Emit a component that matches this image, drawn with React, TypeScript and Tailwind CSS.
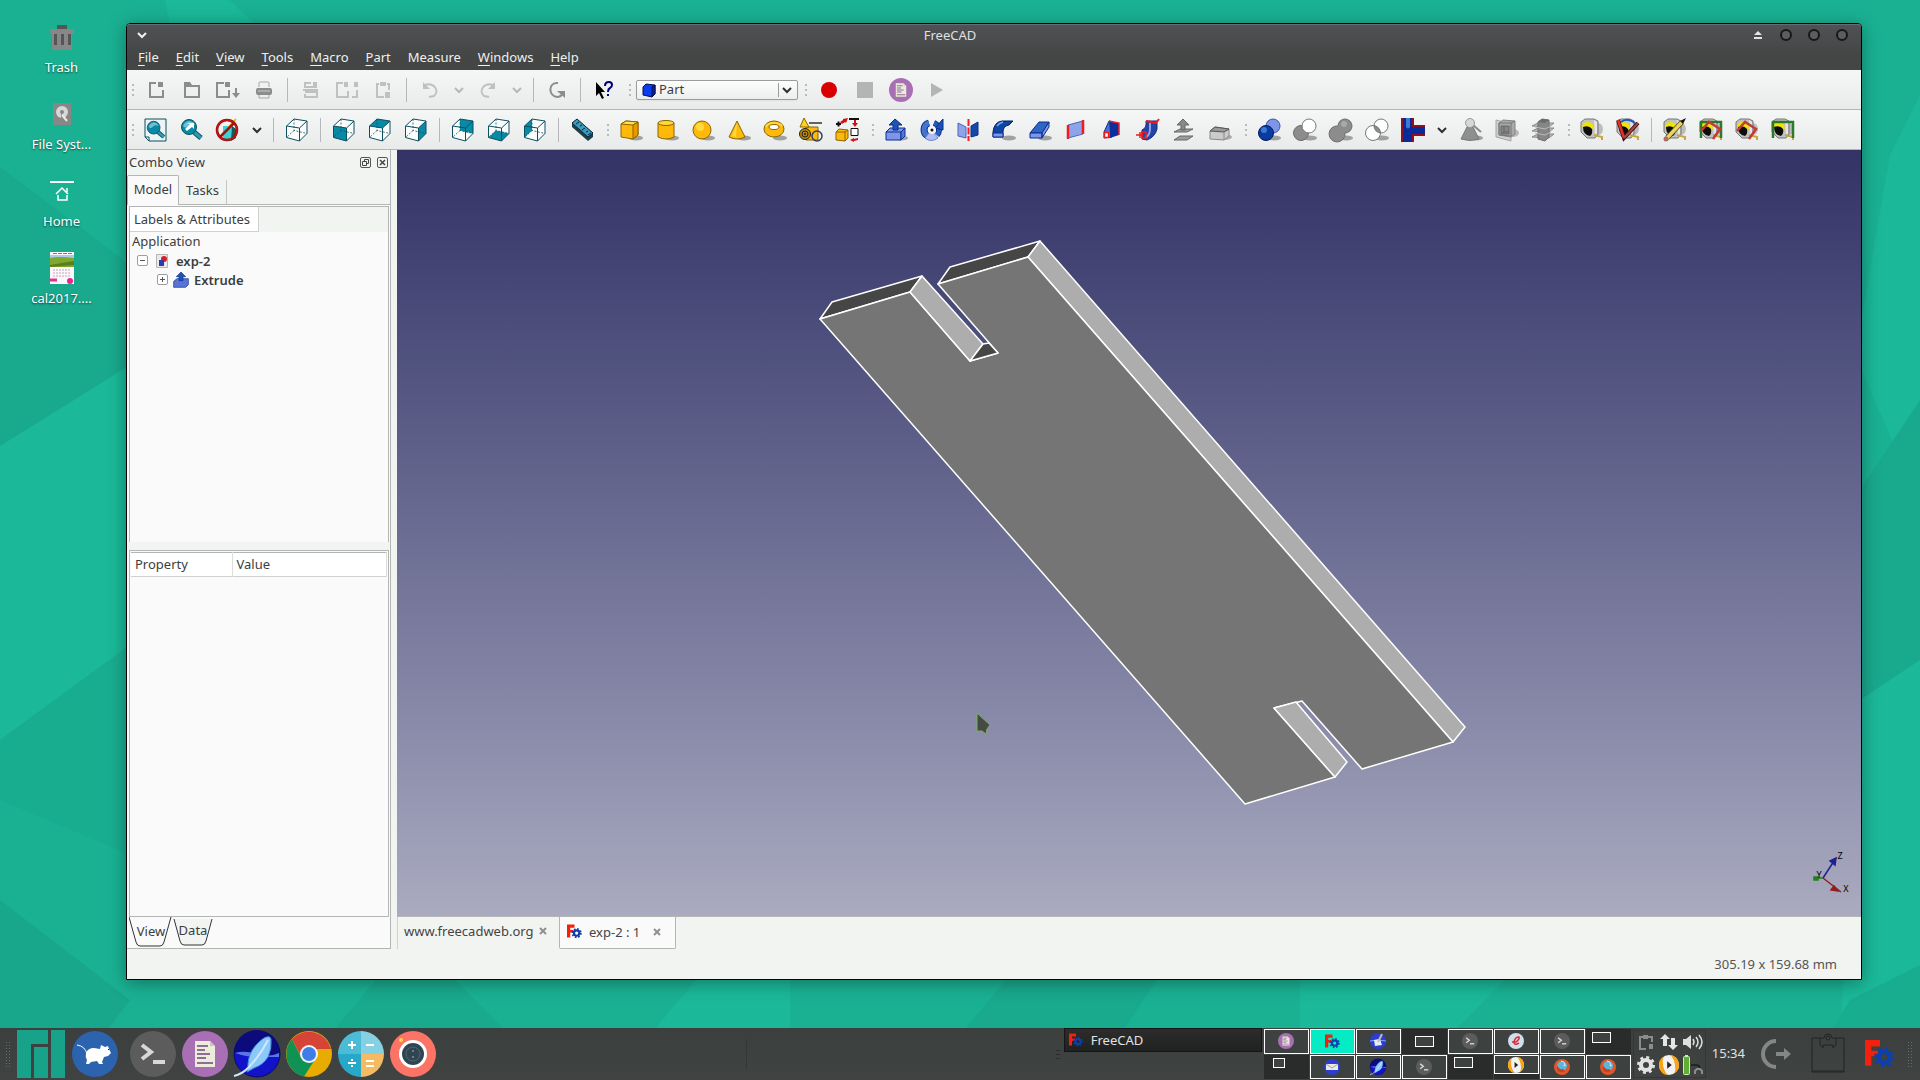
import { ReactNode } from "react";

const YELLOW = "#ffb90a";
const TEAL = "#078aa6";
const LINE = "#0d4f5f";

const Svg = ({ children, size = "h-6 w-6", box = "0 0 24 24" }: { children: ReactNode; size?: string; box?: string }) => (
    <svg className={`${size} shrink-0 overflow-visible`} viewBox={box} fill="none" aria-hidden="true">
        {children}
    </svg>
);

/* ---------- file / edit icons ---------- */

const NewIcon = () => (
    <Svg>
        <path d="M12 5H6v14h13v-7" stroke="#8b8d8d" strokeWidth="2" />
        <rect x="14" y="4" width="5" height="5" fill="#8b8d8d" />
    </Svg>
);
const OpenIcon = () => (
    <Svg>
        <path d="M5 8h14v11H5z" stroke="#8b8d8d" strokeWidth="2" />
        <path d="M4 4h6l2 3H4z" fill="#8b8d8d" />
    </Svg>
);
const SaveIcon = () => (
    <Svg>
        <path d="M8 5H1v14h12v-7" stroke="#8b8d8d" strokeWidth="2" />
        <rect x="9" y="4" width="5" height="5" fill="#8b8d8d" />
        <path d="M19 10h2v5h3l-4 5-4-5h3z" fill="#8b8d8d" />
    </Svg>
);
const PrintIcon = () => (
    <Svg>
        <path d="M7 9V5q0-1 1-1h8q1 0 1 1v4M7 17v3h10v-3" stroke="#a5a7a7" />
        <rect x="4" y="10" width="16" height="7" rx="2" fill="#8b8d8d" />
        <path d="M6 13h12" stroke="#c9cbcb" />
    </Svg>
);
const CutIcon = () => (
    <Svg>
        <path d="M12 5H6v4h12M6 14h12v5H6v-3M4 12h15" stroke="#bfc1c1" strokeWidth="2" />
        <rect x="14" y="4" width="4" height="4" fill="#bfc1c1" />
    </Svg>
);
const CopyIcon = () => (
    <Svg>
        <path d="M8 5H2v14h11v-6M17 19h5v-7" stroke="#bfc1c1" strokeWidth="2" />
        <path d="M9 4h4v5H9zM19 4h4v5h-4z" fill="#bfc1c1" />
    </Svg>
);
const PasteIcon = () => (
    <Svg>
        <path d="M8 6H6v13h7M16 6h2v6" stroke="#bfc1c1" strokeWidth="2" />
        <path d="M9 4h6v4H9zM14 14h5v6h-5z" fill="#bfc1c1" />
    </Svg>
);
const UndoIcon = () => (
    <Svg>
        <path d="M7 7c9-3 15 6 9 11l-5 1" stroke="#bfc1c1" strokeWidth="2" />
        <path d="M5 4v7h7z" fill="#bfc1c1" />
    </Svg>
);
const RedoIcon = () => (
    <Svg>
        <path d="M17 7C8 4 2 13 8 18l5 1" stroke="#bfc1c1" strokeWidth="2" />
        <path d="M19 4v7h-7z" fill="#bfc1c1" />
    </Svg>
);
const RefreshIcon = () => (
    <Svg>
        <path d="M13 5C3 4 3 18 12 19q4 0 6-4" stroke="#8b8d8d" strokeWidth="2" />
        <path d="M12 13h8v7z" fill="#8b8d8d" />
    </Svg>
);
const WhatsThisIcon = () => (
    <Svg>
        <path d="M4 4v14l3-3 3 6 2-1-3-6h4z" fill="#000" />
        <path d="M13 8q0-4 4-4 3 0 3 3 0 2-2 3t-2 4M16 16v2" stroke="#000080" strokeWidth="2" />
    </Svg>
);

/* ---------- view icons ---------- */

const Lens = () => (
    <>
        <path d="m14 14 7 6" stroke={LINE} strokeWidth="5" />
        <path d="m14 14 7 6" stroke="#2c9bb8" strokeWidth="3" />
        <circle cx="9" cy="9" r="7.500" fill={TEAL} stroke={LINE} />
        <path d="M3 8q2-5 7-5 4 1 5 4-5-2-7 1T3 8" fill="#6fc0d4" />
    </>
);
const FitAllIcon = () => (
    <Svg>
        <path d="M1 1h21v22H5l-4-4z" fill="#eef4f5" stroke={LINE} />
        <path d="M1 19h4v4" stroke={LINE} />
        <g transform="translate(2 2) scale(.85)"><Lens /></g>
    </Svg>
);
const FitSelectionIcon = () => (
    <Svg>
        <Lens />
        <path d="m5 11 5-5-3-1h7v6l-2-2-5 4z" fill="#fff" />
    </Svg>
);
const DrawStyleIcon = () => (
    <Svg>
        <path d="M7 8h9l3 3v9l-4 2H7z" fill="#38d3d3" />
        <path d="m16 8 4 3v9l-5 3z" fill="#1a5a5a" />
        <path d="m12 10 8-9" stroke="#f5c400" strokeWidth="2" />
        <circle cx="11" cy="12" r="10" stroke="#8a0a0a" strokeWidth="2.500" />
        <circle cx="11" cy="12" r="10" stroke="#cc1212" strokeWidth="1.500" />
        <path d="M18 5 4 19" stroke="#a80d0d" strokeWidth="2.500" />
    </Svg>
);

const FACES = {
    none: "",
    front: "M1.5 8l13 2v13l-13-3.500z",
    top: "M1.5 8 9 1l13 2-7.500 7z",
    right: "M14.5 10 22 3v12.500l-7.500 7.500z",
    rear: "M9 1l13 2v12.500L9 12.500z",
    bottom: "M1.500 19.500 9 12.500l13 3-7.500 7.500z",
    left: "M1.500 8 9 1v11.500l-7.500 7z",
};

const CubeView = ({ face }: { face: keyof typeof FACES }) => (
    <Svg>
        <path d="M1.500 8 9 1l13 2v12.500L14.500 23l-13-3.500z" fill="#fbfdfd" />
        <path d={FACES[face]} fill={TEAL} />
        <path d="M9 1v11.500l13 3M9 12.500l-7.500 7" stroke={LINE} strokeDasharray="2 1.500" strokeWidth=".8" />
        <path d="M1.500 8 9 1l13 2v12.500L14.500 23l-13-3.500zl13 2V23M14.500 10 22 3" stroke={LINE} strokeLinejoin="round" />
    </Svg>
);
const RulerIcon = () => (
    <Svg>
        <path d="m2 5 5-4 16 14v4l-5 4L2 9z" fill="#1c3f4d" />
        <path d="m2 5 5-4 16 14-5 4z" fill="#3a9bc0" stroke="#12242b" />
        <path d="m9 4-3 2m6 1-2 1m5 2-3 2m6 1-2 1m5 1-3 2" stroke="#12242b" />
    </Svg>
);

/* ---------- solids ---------- */

const Shadow = () => <ellipse cx="17" cy="20" rx="7" ry="2.500" fill="#777" opacity=".65" />;

const BoxIcon = () => (
    <Svg>
        <Shadow />
        <path d="M2 6l5-3 12 1v13l-5 4-12-2z" fill={YELLOW} stroke="#8a6500" />
        <path d="M2 6l5-3 12 1-5 3z" fill="#ffe14a" stroke="#8a6500" />
        <path d="M14 7v14l5-4V4z" fill="#e89a00" stroke="#8a6500" />
    </Svg>
);
const CylinderIcon = () => (
    <Svg>
        <Shadow />
        <path d="M3 5v14q8 4 16 0V5" fill={YELLOW} stroke="#8a6500" />
        <ellipse cx="11" cy="5" rx="8" ry="2.500" fill="#ffd83a" stroke="#8a6500" />
    </Svg>
);
const SphereIcon = () => (
    <Svg>
        <Shadow />
        <circle cx="11" cy="12" r="9" fill={YELLOW} stroke="#8a6500" />
        <circle cx="9" cy="9" r="4" fill="#ffdc3c" />
    </Svg>
);
const ConeIcon = () => (
    <Svg>
        <Shadow />
        <path d="m10 3-8 16q8 4 16 0z" fill={YELLOW} stroke="#8a6500" />
        <path d="m10 5-5 13 4 1z" fill="#ffdc3c" />
    </Svg>
);
const TorusIcon = () => (
    <Svg>
        <Shadow />
        <ellipse cx="11" cy="11" rx="10" ry="8" fill={YELLOW} stroke="#8a6500" />
        <ellipse cx="11" cy="9" rx="5" ry="2.500" fill="#fff" stroke="#8a6500" />
        <path d="M3 9q1-4 8-4 6 0 8 3" stroke="#ffe14a" strokeWidth="1.500" />
    </Svg>
);
const PrimitivesIcon = () => (
    <Svg>
        <path d="M7 9h12v13H7z" fill={YELLOW} stroke="#8a6500" />
        <path d="M5 0 1 9h9z" fill="#ffd21f" stroke="#8a6500" />
        <path d="M10 5h13" stroke="#333" strokeWidth="1.500" />
        <circle cx="6" cy="16" r="5.500" fill="#b88600" stroke="#222" />
        <circle cx="6" cy="16" r="3" stroke="#222" />
        <circle cx="6" cy="16" r="1" fill="#222" />
        <circle cx="18" cy="18" r="5" stroke="#33405c" strokeWidth="1.500" />
    </Svg>
);
const ShapeBuilderIcon = () => (
    <Svg>
        <path d="M1 14l3-3 9 1v8l-3 3-9-1z" fill={YELLOW} stroke="#8a6500" />
        <path d="M1 14h9v9M10 14l3-2" stroke="#8a6500" />
        <path d="M1 6h5M3.500 3.500v5M14 1h10" stroke="#111" strokeWidth="2" />
        <path d="M16 10.500h7v7h-7z" fill="#fff" stroke="#111" />
        <path d="m5 4 3-2v-1l5-1-2 5-1-1-3 2zM19 2h2v3h2l-3 4-3-4h2zM23 20l-4 1v-1l-4 2 4 2v-1l4-1z" fill="#d41111" />
    </Svg>
);

/* ---------- part tools ---------- */

const NAVY = "#0b2f8f";
const SKY = "#7f96e8";

const ExtrudeIcon = () => (
    <Svg>
        <Shadow />
        <path d="m2 14 4-4h15l-4 4v8H2z" fill={SKY} stroke={NAVY} />
        <path d="m17 14 4-4v8l-4 4z" fill="#5a74d6" stroke={NAVY} />
        <path d="M2 14h15" stroke={NAVY} />
        <path d="M11 1 5 7h4v5h5V7h4z" fill="#1c55b5" stroke={NAVY} />
    </Svg>
);
const RevolveIcon = () => (
    <Svg>
        <path d="M8 18a7 7 0 0 1 1-13" stroke={NAVY} strokeWidth="7" />
        <path d="M8 18a7 7 0 0 1 1-13" stroke="#4474cc" strokeWidth="5" />
        <path d="M5 20q6 5 13 0l-4-5q-3 1-5 0z" fill="#b0bdf2" stroke="#6c80cf" />
        <path d="M14 5q5 2 5 7 0 3-2 5" stroke={NAVY} strokeWidth="6" />
        <path d="M14 5q5 2 5 7 0 3-2 5" stroke="#2560bd" strokeWidth="4" />
        <path d="M15 10 23 1v11z" fill="#1c50b8" stroke={NAVY} />
        <circle cx="12" cy="12" r="4" fill="#f4f6fb" />
        <circle cx="12" cy="12" r="1.500" fill="#111" />
    </Svg>
);
const MirrorIcon = () => (
    <Svg>
        <path d="m2 5 8 4v11l-8-2z" fill="#8fa3ea" stroke="#4d65bd" />
        <path d="m22 4-7 4v11l7-2z" fill="#1648a8" stroke={NAVY} />
        <path d="M12.500 1v22" stroke="#ff1c1c" strokeWidth="2" strokeDasharray="7 1.500" />
    </Svg>
);
const FilletIcon = () => (
    <Svg>
        <Shadow />
        <path d="M1 19v-5Q2 4 10 3h11l-4 4q-6 1-6 7v5z" fill="#0d46a5" stroke="#071f66" />
        <path d="M1 19v-4h10v4z" fill={SKY} stroke={NAVY} />
        <path d="M5 8q2-3 6-4" stroke="#7aa4ea" strokeWidth="1.500" />
    </Svg>
);
const ChamferIcon = () => (
    <Svg>
        <Shadow />
        <path d="m2 15 9-11h10l-7 11z" fill="#2d66c4" stroke={NAVY} />
        <path d="M2 15h12v5H2zM14 15l7-11v5l-7 11z" fill={SKY} stroke={NAVY} />
    </Svg>
);
const RuledIcon = () => (
    <Svg>
        <path d="m4 7 14-4v13L4 20z" fill="#8fa3ea" />
        <path d="M4 7v14M19 2v14" stroke="#f21a1a" strokeWidth="2.500" />
        <path d="m4 7 15-4M4 20l15-4" stroke="#4d65bd" />
    </Svg>
);
const LoftIcon = () => (
    <Svg>
        <path d="m4 14 5-11 3 1v15l-8 1z" fill="#4c6fd0" stroke={NAVY} />
        <path d="m9 3 10 2v12l-9 3V14z" fill="#0d2f9c" />
        <path d="m9 3 10 2v12" stroke="#e8232b" strokeWidth="1.500" />
        <path d="M4.500 14.500h4v5h-4z" fill="#fff" stroke="#f21a1a" strokeWidth="1.500" />
    </Svg>
);
const SweepIcon = () => (
    <Svg>
        <path d="M10 3h11v8q-2 8-10 11l-5-1v-9q5-2 4-9" fill="#2144a8" stroke="#132b7a" />
        <path d="M14 5v6q0 6-5 9" stroke="#8fa3ea" strokeWidth="2" />
        <path d="m10 3 10 2 3-4" stroke="#f21a1a" strokeWidth="2" />
        <path d="M0 17h7M4 14v6M6 14h4v6H6z" stroke="#f21a1a" strokeWidth="1.500" />
    </Svg>
);
const OffsetIcon = () => (
    <Svg>
        <path d="m2 22 6-4h13l-6 4zM2 14l6-3h13l-6 3z" fill="#9b9b9b" stroke="#666" />
        <path d="m11 1-6 6h4v5h4V7h4z" fill="#888" stroke="#666" />
    </Svg>
);
const ThicknessIcon = () => (
    <Svg>
        <ellipse cx="16" cy="19" rx="8" ry="3" fill="#aaa" />
        <path d="m2 13 5-4 14 2v7l-5 4-14-1z" fill="#cbcbcb" stroke="#888" />
        <path d="m2 13 5-4 14 2-5 3z" fill="#999" stroke="#555" />
        <path d="M16 14v8" stroke="#888" />
    </Svg>
);

/* ---------- booleans ---------- */

const BooleanIcon = () => (
    <Svg>
        <Shadow />
        <circle cx="16" cy="8" r="7" fill={SKY} stroke="#3a51ad" />
        <circle cx="9" cy="15" r="7.500" fill="#0b3ba0" stroke="#041a57" />
        <circle cx="7" cy="12" r="3" fill="#3b77d8" />
    </Svg>
);
const SubtractIcon = () => (
    <Svg>
        <Shadow />
        <circle cx="8" cy="15" r="7.500" fill="#8c8c8c" stroke="#6d6d6d" />
        <circle cx="16" cy="8" r="7" fill="#fff" stroke="#777" />
    </Svg>
);
const UnionIcon = () => (
    <Svg>
        <Shadow />
        <path d="M9 8a7 7 0 1 1 7 7 8 8 0 1 1-7-7" fill="#8c8c8c" stroke="#6d6d6d" />
        <circle cx="15" cy="6" r="3" fill="#a8a8a8" />
    </Svg>
);
const IntersectIcon = () => (
    <Svg>
        <Shadow />
        <circle cx="8" cy="15" r="7.500" fill="#fff" />
        <circle cx="16" cy="8" r="7" fill="#fff" />
        <path d="M9 7.500a7.500 7.500 0 0 1 6.500 7.500A7 7 0 0 1 9 7.500" fill="#8c8c8c" />
        <circle cx="8" cy="15" r="7.500" stroke="#777" />
        <circle cx="16" cy="8" r="7" stroke="#777" />
    </Svg>
);
const JoinIcon = () => (
    <Svg>
        <path d="M1 0h11v24H1z" fill="#0a2a99" />
        <path d="M12 9h12v7H12z" fill="#0a2a99" />
        <path d="M5 0h4v9q-2 3-4 0z" fill="#3d78d8" />
        <path d="M1 0v24M12 0v8h12M12 24v-7h12" stroke="#8c1220" strokeWidth="2" />
    </Svg>
);
const CheckGeometryIcon = () => (
    <Svg>
        <Shadow />
        <path d="M8 9 2 21q9 3 18 0L14 9z" fill="#8f8f8f" stroke="#777" />
        <path d="m14 7 8 7" stroke="#888" strokeWidth="2" />
        <circle cx="11" cy="5" r="4.500" fill="#d7d7d7" stroke="#999" />
    </Svg>
);
const SectionIcon = () => (
    <Svg>
        <ellipse cx="18" cy="15" rx="6" ry="4" fill="#b9b9b9" />
        <path d="m1 2 15 4v17L1 19z" fill="#cfcfcf" stroke="#a5a5a5" />
        <path d="m4 5 4-3 12 1v13l-4 3-12-2z" fill="#a9a9a9" stroke="#858585" />
        <path d="M4 5h12v13L4 17zM16 5l4-2" stroke="#777" />
        <path d="M6 8h8v8H6z" fill="#858585" stroke="#666" />
        <path d="M9 8v6l-3 2M9 14h5" stroke="#666" />
    </Svg>
);
const CrossSectionsIcon = () => (
    <Svg>
        <path d="m1 8 6-3h16l-5 4zM1 13l6-3h16l-5 4zM1 19l6-3h16l-5 4z" fill="#bbb" stroke="#8a8a8a" />
        <path d="m7 4 4-3 7 1v17l-4 4-7-2z" fill="#868686" stroke="#6d6d6d" />
        <path d="m7 4 4-3 7 1-4 3z" fill="#6b6b6b" />
        <path d="m4 9 10 2 6-3M4 15l10 2 6-3" stroke="#bbb" />
    </Svg>
);

/* ---------- measure ---------- */

const Tape = ({ children }: { children?: ReactNode }) => (
    <Svg>
        <ellipse cx="18" cy="11" rx="5" ry="6" fill="#999" opacity=".6" />
        <path d="M1 4 5 1h9l4 2v13l-3 4H7l-6-6z" fill="#c2c2c2" stroke="#777" />
        <path d="m14 2 3 2v11l-2 3z" fill="#e6e6e6" />
        <path d="M2 9q1-5 6-5 6 1 6 7z" fill="#f0e400" />
        <path d="M3 9q6-2 9 2 1 5-2 7-7-1-7-9" fill="#0d0d0d" />
        <path d="m14 17 8 2v3" stroke="#c8a63c" strokeWidth="2" />
        {children}
    </Svg>
);
const LinearIcon = () => <Tape />;
const AngularIcon = () => (
    <Tape>
        <path d="M5 4q6-5 14 1" stroke="#1c59c4" strokeWidth="2" />
        <path d="m2 2 6 18L22 5" stroke="#4a0d0d" strokeWidth="4" />
        <path d="m2 2 6 18" stroke="#e03030" strokeWidth="2.500" />
        <path d="M8 20 22 5" stroke="#a04848" strokeWidth="2" />
    </Tape>
);
const ClearMeasureIcon = () => (
    <Tape>
        <path d="M4 20 19 4" stroke="#4c431c" strokeWidth="5" />
        <path d="M4 20 19 4" stroke="#ead65c" strokeWidth="3.500" />
        <path d="m17 3 6-3-3 6z" fill="#111" />
        <circle cx="3" cy="21" r="2.500" fill="#b06a6a" />
    </Tape>
);
const ToggleAllIcon = () => (
    <Tape>
        <path d="M2 20V4h20v16" stroke="#2a7a2a" strokeWidth="2.500" />
        <path d="m2 13 8-9 11 7-7 10" stroke="#c23a3a" strokeWidth="2.500" />
    </Tape>
);
const Toggle3dIcon = () => (
    <Tape>
        <path d="m2 13 8-9 11 7-7 10" stroke="#c23a3a" strokeWidth="2.500" />
    </Tape>
);
const ToggleDeltaIcon = () => (
    <Tape>
        <path d="M2 20V4h20v16" stroke="#2a7a2a" strokeWidth="2.500" />
    </Tape>
);

/* ---------- macro and app icons ---------- */

const RecordIcon = () => <Svg><circle cx="12" cy="12" r="8" fill="#d90000" /></Svg>;
const StopIcon = () => <Svg><path d="M4 4h16v16H4z" fill="#b3b4b4" /></Svg>;
const PlayIcon = () => <Svg><path d="m6 5 12 7-12 7z" fill="#b3b4b4" /></Svg>;

const TextApp = ({ size }: { size: string }) => (
    <Svg size={size} box="0 0 46 46">
        <circle cx="23" cy="23" r="23" fill="#a96fb4" />
        <path d="M13 10h15l5 5v21H13z" fill="#ecebdc" />
        <path d="M28 10v5h5z" fill="#c9c7b8" />
        <path d="M15 15h11M15 19h8M15 23h13M15 27h9M15 32h16" stroke="#8e6f94" strokeWidth="2" />
    </Svg>
);
const MacroIcon = () => <TextApp size="h-6 w-6" />;

const TerminalApp = ({ size }: { size: string }) => (
    <Svg size={size} box="0 0 46 46">
        <circle cx="23" cy="23" r="23" fill="#5c5c5c" />
        <path d="m12 14 9 7-9 7" stroke="#d8d8d8" strokeWidth="4" />
        <path d="M23 31h12" stroke="#d8d8d8" strokeWidth="4" />
    </Svg>
);
const SeamonkeyApp = ({ size }: { size: string }) => (
    <Svg size={size} box="0 0 46 46">
        <circle cx="23" cy="23" r="23" fill="#1212c8" stroke="#0a0a6a" />
        <path d="M0 22a23 23 0 0 1 46 0q-12 4-23 1T0 22" fill="#0b0b7d" />
        <path d="M1 22q10-3 22 1t22-1v4q-12 0-22 0T1 22" fill="#5c74ea" />
        <path d="M14 38C13 24 20 14 30 7q6-3 7 1 1 10-3 18-5 8-14 11l-7 4z" fill="#8cc8f8" stroke="#3f86d6" />
        <path d="M0 45q8-2 14-8 12-12 20-28" stroke="#cfe8ff" strokeWidth="2" />
    </Svg>
);
const FreecadLogo = ({ size }: { size: string }) => (
    <Svg size={size} box="0 0 28 28">
        <path d="M0 1h14v6H6v4h6v5H6v9H0z" fill="#f2200c" />
        <circle cx="18" cy="17" r="5" stroke="#0d3fae" strokeWidth="4" />
        <circle cx="18" cy="17" r="7.500" stroke="#0d3fae" strokeWidth="4" strokeDasharray="2.900 2.990" />
    </Svg>
);
const ManjaroLogo = () => (
    <Svg size="h-12 w-12" box="0 0 48 48">
        <path d="M0 0h31v14H14v34H0zM17 17h14v31H17zM34 0h14v48H34z" fill="#17a289" />
    </Svg>
);
const XfceApp = () => (
    <Svg size="h-[46px] w-[46px]" box="0 0 46 46">
        <circle cx="23" cy="23" r="23" fill="#2c63ae" />
        <path d="M14 22q2-5 8-5l6 1 1-4 4 2 3-1 1 3 2 4-3 3-4 1-2 5 1 2h-4l-2-3-6 1-2 2h-3l1-4q-2-3-1-7z" fill="#fff" />
        <path d="M15 23Q13 15 5 14" stroke="#fff" />
        <path d="M36 18h1v1h-1z" fill="#222" />
    </Svg>
);
const ChromeApp = () => (
    <Svg size="h-[46px] w-[46px]" box="0 0 46 46">
        <circle cx="23" cy="23" r="23" fill="#e8ab00" />
        <path d="M6 8a23 23 0 0 1 39 10H23l-7 9z" fill="#d64337" />
        <path d="M6 8a23 23 0 0 0 12 37.500L28 30l-12-2z" fill="#109255" />
        <circle cx="23" cy="23" r="9" fill="#f4f4f4" />
        <circle cx="23" cy="23" r="7" fill="#3f7ee8" />
    </Svg>
);
const CalculatorApp = () => (
    <Svg size="h-[46px] w-[46px]" box="0 0 46 46">
        <path d="M23 0A23 23 0 0 0 0 23h23z" fill="#4cbcd6" />
        <path d="M23 0a23 23 0 0 1 23 23H23z" fill="#86d0e4" />
        <path d="M0 23a23 23 0 0 0 23 23V23z" fill="#27a8c8" />
        <path d="M46 23a23 23 0 0 1-23 23V23z" fill="#f4bb62" />
        <path d="M10 14h8M14 10v8M28 14h8M10 32h8M28 30h8M28 35h8" stroke="#fff" strokeWidth="2" />
        <path d="M13 28h2v2h-2zM13 34h2v2h-2z" fill="#fff" />
    </Svg>
);
const CameraApp = () => (
    <Svg size="h-[46px] w-[46px]" box="0 0 46 46">
        <circle cx="23" cy="23" r="23" fill="#fb7466" />
        <circle cx="11" cy="9" r="2" fill="#f9d64a" />
        <circle cx="23" cy="23" r="14" fill="#fff" />
        <circle cx="23" cy="23" r="11" fill="#2f4552" />
        <circle cx="23" cy="23" r="7" stroke="#4f6673" />
        <circle cx="23" cy="20" r="1" fill="#7e919c" />
        <circle cx="23" cy="26" r="1" fill="#7e919c" />
    </Svg>
);
const MediaApp = ({ size }: { size: string }) => (
    <Svg size={size} box="0 0 22 22">
        <circle cx="11" cy="11" r="11" fill="#f2f2f2" />
        <path d="M5 2a11 11 0 0 0 4 20Q2 12 5 2M17 20a11 11 0 0 0-4-20q7 10 4 20" fill="#f7a516" />
        <path d="M9 7v8l5-4z" fill="#222" />
    </Svg>
);
const FirefoxApp = () => (
    <Svg size="h-4 w-4" box="0 0 16 16">
        <circle cx="8" cy="8" r="8" fill="#e0552b" />
        <circle cx="8" cy="7" r="5" fill="#5cb6d8" />
        <path d="M3 6q2 5 6 4l2 2q-5 3-8-1z" fill="#c9401f" />
        <path d="M7 2q5 1 3 5l2-1" stroke="#cdeefa" />
    </Svg>
);
const ReaderApp = () => (
    <Svg size="h-4 w-4" box="0 0 16 16">
        <circle cx="8" cy="8" r="8" fill="#cfe0ea" />
        <path d="M4 9h4q4-3 3-5-4 0-5 5 0 4 5 1" stroke="#d62a3b" strokeWidth="1.500" />
    </Svg>
);
const MailApp = () => (
    <Svg size="h-4 w-4" box="0 0 16 16">
        <circle cx="8" cy="8" r="8" fill="#2a3fd0" />
        <path d="M2 5h12v6H2z" fill="#efe9e4" />
        <path d="m2 5 6 4 6-4" stroke="#a59d98" />
    </Svg>
);
const ComposerApp = () => (
    <Svg size="h-4 w-4" box="0 0 16 16">
        <circle cx="8" cy="8" r="8" fill="#2a3fd0" />
        <path d="M0 8q8-2 16 0" stroke="#88a4ff" />
        <path d="m4 7 6-1 2 6-7 1z" fill="#e8ecf5" />
        <path d="m8 9 4-8" stroke="#cbb9ae" strokeWidth="2" />
    </Svg>
);

/* ---------- toolbar ---------- */

const Handle = ({ first = false }: { first?: boolean }) => (
    <div className={`${first ? "w-[11px]" : "w-[13px]"} flex shrink-0 flex-col items-end gap-[3px] pr-1`}>
        <i className="h-0.5 w-0.5 bg-[#b9bbbb]" />
        <i className="h-0.5 w-0.5 bg-[#b9bbbb]" />
        <i className="h-0.5 w-0.5 bg-[#b9bbbb]" />
    </div>
);

const Separator = () => (
    <div className="flex w-[11px] shrink-0 justify-center">
        <i className="h-6 w-px bg-[#b6b8b8]" />
    </div>
);

const Chevron = ({ color = "#2c3030" }: { color?: string }) => (
    <Svg size="h-3 w-3" box="0 0 12 12">
        <path d="m2 4 4 4 4-4" stroke={color} strokeWidth="2" />
    </Svg>
);

type Tool = [string, () => ReactNode];

const Tools = ({ items }: { items: Tool[] }) => (
    <>
        {items.map(([label, Icon]) => (
            <button key={label} aria-label={label} className="flex h-9 w-9 shrink-0 items-center justify-center">
                <Icon />
            </button>
        ))}
    </>
);

const DropArrow = ({ label, color }: { label: string; color?: string }) => (
    <button aria-label={label} className="flex h-9 w-[22px] shrink-0 items-center justify-center">
        <Chevron color={color} />
    </button>
);

const face = (name: keyof typeof FACES) => () => <CubeView face={name} />;

const FileToolbar = () => (
    <div className="flex h-10 items-center border-b border-[#b4b6b6] bg-linear-to-b from-[#f5f7f6] to-[#e9ebeb]">
        <Handle first />
        <Tools items={[["New", NewIcon], ["Open", OpenIcon], ["Save", SaveIcon], ["Print", PrintIcon]]} />
        <Separator />
        <Tools items={[["Cut", CutIcon], ["Copy", CopyIcon], ["Paste", PasteIcon]]} />
        <Separator />
        <Tools items={[["Undo", UndoIcon]]} />
        <DropArrow label="Undo history" color="#b6b8b8" />
        <Tools items={[["Redo", RedoIcon]]} />
        <DropArrow label="Redo history" color="#b6b8b8" />
        <Separator />
        <Tools items={[["Refresh", RefreshIcon]]} />
        <Separator />
        <Tools items={[["What's This?", WhatsThisIcon]]} />
        <Handle />
        <label className="ml-px flex h-5 w-[162px] items-center rounded-xs border border-[#9a9c9c] bg-linear-to-b from-[#fdfdfd] to-[#eceeee] px-1 shadow-xs">
            <Svg size="h-4 w-4" box="0 0 16 16">
                <path d="m2 5 3-3 9 1v9l-3 3-9-2z" fill="#0a3cf0" stroke="#050f4a" />
                <path d="m11 5 3-2v9l-3 3z" fill="#0620a0" stroke="#050f4a" />
            </Svg>
            <select aria-label="Workbench" className="min-w-0 grow appearance-none pb-0.5 pl-0.5 leading-4 outline-none">
                <option>Part</option>
            </select>
            <span className="mr-0.5 h-3.5 w-px bg-[#9a9c9c]" />
            <Chevron />
        </label>
        <Handle />
        <Tools items={[["Record macro", RecordIcon], ["Stop recording", StopIcon], ["Macros", MacroIcon], ["Run macro", PlayIcon]]} />
    </div>
);

const PartToolbar = () => (
    <div className="flex h-10 items-center border-b border-[#b4b6b6] bg-linear-to-b from-[#f5f7f6] to-[#e9ebeb]">
        <Handle first />
        <Tools items={[["Fit all", FitAllIcon], ["Fit selection", FitSelectionIcon], ["Draw style", DrawStyleIcon]]} />
        <DropArrow label="Draw styles" />
        <Separator />
        <Tools items={[["Axonometric", face("none")]]} />
        <Separator />
        <Tools items={[["Front", face("front")], ["Top", face("top")], ["Right", face("right")]]} />
        <Separator />
        <Tools items={[["Rear", face("rear")], ["Bottom", face("bottom")], ["Left", face("left")]]} />
        <Separator />
        <Tools items={[["Measure distance", RulerIcon]]} />
        <Handle />
        <Tools items={[["Box", BoxIcon], ["Cylinder", CylinderIcon], ["Sphere", SphereIcon], ["Cone", ConeIcon], ["Torus", TorusIcon], ["Primitives", PrimitivesIcon], ["Shape builder", ShapeBuilderIcon]]} />
        <Handle />
        <Tools items={[["Extrude", ExtrudeIcon], ["Revolve", RevolveIcon], ["Mirror", MirrorIcon], ["Fillet", FilletIcon], ["Chamfer", ChamferIcon], ["Ruled surface", RuledIcon], ["Loft", LoftIcon], ["Sweep", SweepIcon], ["Offset", OffsetIcon], ["Thickness", ThicknessIcon]]} />
        <Handle />
        <Tools items={[["Boolean", BooleanIcon], ["Subtract", SubtractIcon], ["Union", UnionIcon], ["Intersection", IntersectIcon], ["Join", JoinIcon]]} />
        <DropArrow label="Join options" />
        <Tools items={[["Check geometry", CheckGeometryIcon], ["Section", SectionIcon], ["Cross-sections", CrossSectionsIcon]]} />
        <Handle />
        <Tools items={[["Measure linear", LinearIcon], ["Measure angular", AngularIcon]]} />
        <Separator />
        <Tools items={[["Clear all", ClearMeasureIcon], ["Toggle all", ToggleAllIcon], ["Toggle 3D", Toggle3dIcon], ["Toggle delta", ToggleDeltaIcon]]} />
    </div>
);

/* ---------- window chrome ---------- */

const TitleBar = () => (
    <div className="flex h-[22px] items-center border-t border-[#6a6b6e] pr-[13px] pb-px pl-[9px]">
        <button aria-label="Window menu">
            <Chevron color="#f2f2f2" />
        </button>
        <h1 className="grow text-center text-[#dfe0e0]">FreeCAD</h1>
        <div className="flex items-center gap-4">
            <button aria-label="Keep above">
                <Svg size="h-3 w-3" box="0 0 12 12">
                    <path d="m2 6 4-4 4 4zM2 8h8v2H2z" fill="#e4e4e4" />
                </Svg>
            </button>
            {["Minimize", "Maximize", "Close"].map((name) => (
                <button key={name} aria-label={name} className="h-3 w-3 rounded-full border-2 border-[#161718] bg-[#5c5d60]" />
            ))}
        </div>
    </div>
);

const MENUS = ["File", "Edit", "View", "Tools", "Macro", "Part", "Measure", "Windows", "Help"];

const MenuBar = () => (
    <nav className="flex h-6 items-center gap-[17px] pb-0.5 pl-[11px] text-[#eff0f0]">
        {MENUS.map((name) => (
            <button key={name} className="leading-5">
                {name === "Measure" ? name : <><span className="underline underline-offset-3">{name[0]}</span>{name.slice(1)}</>}
            </button>
        ))}
    </nav>
);

const TreeToggle = ({ open = false }: { open?: boolean }) => (
    <button aria-label={open ? "Collapse" : "Expand"} className="flex h-[11px] w-[11px] items-center justify-center rounded-xs border border-[#9c9e9e] bg-white">
        <Svg size="h-[9px] w-[9px]" box="0 0 9 9">
            <path d={open ? "M2 4.500h5" : "M2 4.500h5M4.500 2v5"} stroke="#555" />
        </Svg>
    </button>
);

const ComboView = () => (
    <aside className="flex w-[264px] shrink-0 flex-col border-r border-b border-[#b4b6b6]">
        <div className="flex h-6 items-center gap-1.5 px-0.5">
            <h2 className="grow">Combo View</h2>
            <button aria-label="Float" className="flex h-[11px] w-[11px] items-center justify-center rounded-xs border border-[#555]">
                <Svg size="h-[7px] w-[7px]" box="0 0 7 7"><path d="M.5 2.500h4v4h-4zM2.500 2.500v-2h4v4h-2" stroke="#444" /></Svg>
            </button>
            <button aria-label="Close panel" className="flex h-[11px] w-[11px] items-center justify-center rounded-xs border border-[#555]">
                <Svg size="h-[7px] w-[7px]" box="0 0 7 7"><path d="m1 1 5 5M6 1 1 6" stroke="#444" strokeWidth="1.500" /></Svg>
            </button>
        </div>
        <div className="flex h-[31px] items-end border-b border-[#b4b6b6]">
            <button className="-mb-px h-[30px] w-[52px] rounded-t-xs border border-b-0 border-[#b4b6b6] bg-[#fafafa] pb-1">Model</button>
            <button className="h-6 w-12 border-r border-[#c4c6c6] pb-1">Tasks</button>
        </div>
        <div className="flex grow flex-col bg-[#fafafa]">
            <section className="mt-px mr-px ml-0.5 flex grow-337 basis-0 flex-col border-t border-r border-l border-[#b4b6b6]">
                <div className="flex h-[25px] bg-[#f2f4f2]">
                    <div className="border-r border-b border-[#cfd1d1] bg-white pr-2 pl-1 leading-6">Labels &amp; Attributes</div>
                </div>
                <div className="pl-0.5">
                    <p className="leading-[19px]">Application</p>
                    <ul className="font-semibold">
                        <li>
                            <div className="flex h-[19px] items-center gap-2 pl-[5px]">
                                <TreeToggle open />
                                <Svg size="h-3.5 w-3" box="0 0 12 14">
                                    <path d="M.5.500h11v13H.5z" fill="#e9e9e9" stroke="#b5b5b5" />
                                    <circle cx="8" cy="5" r="3" fill="#d0202c" />
                                    <path d="M3 6h5v6H3z" fill="#2a3bb0" />
                                </Svg>
                                <span className="leading-[18px]">exp-2</span>
                            </div>
                            <ul className="pl-[25px]">
                                <li className="flex h-[19px] items-center gap-[5px]">
                                    <TreeToggle />
                                    <Svg size="h-4 w-4">
                                        <path d="m1 14 5-4h17v9l-4 4H1z" fill="#5a74d6" stroke={NAVY} />
                                        <path d="M12 0 5 7h4v6h6V7h4z" fill="#1c55b5" stroke={NAVY} />
                                    </Svg>
                                    <span className="leading-[18px]">Extrude</span>
                                </li>
                            </ul>
                        </li>
                    </ul>
                </div>
            </section>
            <div className="h-2 bg-[#f2f4f2]" />
            <section className="mr-px ml-0.5 flex grow-366 basis-0 flex-col border border-[#b4b6b6] p-px">
                <table className="w-full table-fixed border-t border-[#b4b6b6] bg-white text-left">
                    <thead>
                        <tr className="h-6 border-b border-[#d0d2d2]">
                            <th className="w-[101px] border-r border-[#dcdede] pl-1 font-normal">Property</th>
                            <th className="border-r border-[#dcdede] pl-1 font-normal">Value</th>
                        </tr>
                    </thead>
                </table>
            </section>
            <div className="flex h-[31px] items-start pl-0.5">
                <button className="relative h-[30px] w-[44px] pb-0.5 text-center">
                    <svg className="absolute inset-0 h-full w-full" viewBox="0 0 44 30" fill="none" aria-hidden="true">
                        <path d="m0 0 7 25q1 4 4 4h20q3 0 4-4l7-25" stroke="#333" />
                    </svg>
                    <span className="relative">View</span>
                </button>
                <button className="relative h-[30px] w-[40px] pb-1 text-center">
                    <svg className="absolute inset-0 h-full w-full" viewBox="0 0 40 30" fill="none" aria-hidden="true">
                        <path d="m1 2 6 22q1 4 4 4h18q3 0 4-4l6-22" fill="#f2f4f2" stroke="#333" />
                    </svg>
                    <span className="relative">Data</span>
                </button>
            </div>
        </div>
    </aside>
);

const Viewport = () => (
    <div className="min-h-0 grow basis-0 bg-linear-to-b from-[#333366] to-[#aaaac0]">
        <svg className="h-full w-full" viewBox="0 0 1464 766" role="img" aria-label="Extruded plate">
            <g stroke="#fff" strokeWidth="1.500" strokeLinejoin="round">
                <path d="M423 169 435 152 525 126 513 142z" fill="#464646" />
                <path d="M541 134 553 117 643 91 631 107z" fill="#464646" />
                <path d="M631 107 643 91 1068 577 1056 592z" fill="#adadad" />
                <path
                    d="M423 169 513 142 573 211 601 203 541 134 631 107 1056 592 965 619 905 551 877 558 938 627 848 654z"
                    fill="#757575"
                />
                <path d="M513 142 525 126 586 194 573 211z" fill="#adadad" />
                <path d="M573 211 586 194 592 193 601 203z" fill="#464646" />
                <path d="M877 558 899 552 950 612 938 627z" fill="#adadad" />
            </g>
            <path d="M580 563v18h5l4 3 1-5 3-4z" fill="#454a44" stroke="#7fae5c" />
            <g strokeWidth="1.500">
                <path d="M1426 728 1439 708" stroke="#202090" />
                <path d="m1439 708-1 7-5-4z" fill="#202090" stroke="#202090" />
                <path d="m1426 728 18 14" stroke="#902020" />
                <path d="m1441 741-4-5-3 4z" fill="#902020" stroke="#902020" />
                <path d="M1426 728h-9" stroke="#208020" />
                <path d="M1417 727h4v3h-4z" fill="#208020" stroke="#208020" />
            </g>
            <g fontSize="9" textAnchor="middle" fill="#000">
                <text x="1443" y="709">Z</text>
                <text x="1449" y="742">X</text>
                <text x="1422" y="728">Y</text>
            </g>
        </svg>
    </div>
);

const CloseMark = () => (
    <Svg size="h-2.5 w-2.5" box="0 0 10 10">
        <path d="m2 2 6 6M8 2 2 8" stroke="#8f9191" strokeWidth="2" />
    </Svg>
);

const DocumentTabs = () => (
    <div className="flex h-[33px] shrink-0 border-t border-[#b4b6b6] text-[#444]">
        <div className="flex w-[162px] items-center gap-1 border-l border-[#d0d2d2] pb-1 pl-1.5">
            <button className="leading-6">www.freecadweb.org</button>
            <button aria-label="Close tab"><CloseMark /></button>
        </div>
        <div className="flex w-[117px] items-center rounded-b-xs border border-t-0 border-[#b4b6b6] bg-[#fafafa] pb-0.5 pl-[7px]">
            <FreecadLogo size="h-[15px] w-[15px]" />
            <button className="pr-3 pl-[7px] leading-6">exp-2 : 1</button>
            <button aria-label="Close tab"><CloseMark /></button>
        </div>
    </div>
);

const FreecadWindow = () => (
    <main className="mt-[23px] mr-[58px] mb-12 flex min-w-0 grow flex-col overflow-hidden rounded-t-sm border border-black bg-[#f2f4f2] text-[#3b3e3e] shadow-[0_3px_18px_rgba(0,0,0,0.35)]">
        <header className="bg-linear-to-b from-[#505155] to-[#434645] to-70%">
            <TitleBar />
            <MenuBar />
        </header>
        <FileToolbar />
        <PartToolbar />
        <div className="flex min-h-0 grow">
            <ComboView />
            <div className="ml-1.5 flex min-w-0 grow flex-col">
                <Viewport />
                <DocumentTabs />
            </div>
        </div>
        <footer className="flex h-[30px] shrink-0 items-center justify-end pr-6 text-[#555]">305.19 x 159.68 mm</footer>
    </main>
);

/* ---------- desktop ---------- */

const Wallpaper = () => (
    <svg className="absolute inset-0 h-full w-full" viewBox="0 0 1920 1080" preserveAspectRatio="none" aria-hidden="true">
        <path d="M0 0h1920v1080H0z" fill="#1ab193" />
        <path d="M165 0h65l25 25H170z" fill="#1bb899" />
        <path d="M0 167 130 265v105L0 446z" fill="#19a98d" />
        <path d="M0 446 130 365v280L0 740z" fill="#1bb899" />
        <path d="m0 740 130-95v210L0 800z" fill="#19ad90" />
        <path d="m0 900 130 100-60 80H0z" fill="#18a78b" />
        <path d="M380 975h70l60 60H330zM1010 975h150l-40 60H960z" fill="#19a98d" />
        <path d="M1300 975h210l-60 60h-150zM700 975h90v60H650z" fill="#1bb899" />
        <path d="m1920 95-30 60-35 200 65 150z" fill="#1bb899" />
        <path d="M1860 490 1920 400v260l-60 40z" fill="#19a98d" />
        <path d="M1860 700 1920 660v310l-80 65z" fill="#1bb899" />
        <path d="M1920 965v115h-120l50-80z" fill="#19ad90" />
    </svg>
);

const TrashIcon = () => (
    <Svg size="h-[26px] w-6" box="0 0 24 26">
        <path d="M7 1h10v4H7z" fill="#555" />
        <path d="M0 5h24v5h-2v16H2V10H0z" fill="#878787" />
        <path d="M4 10h3v11H4zM11 10h3v11h-3zM18 10h3v11h-3z" fill="#555" />
    </Svg>
);
const DiskIcon = () => (
    <Svg size="h-[22px] w-[18px]" box="0 0 18 22">
        <rect width="18" height="22" rx="1" fill="#878787" />
        <circle cx="9" cy="9" r="6" fill="#d5d9d5" />
        <circle cx="9" cy="9" r="2" fill="#878787" />
        <path d="m8 10 7 9H8z" fill="#878787" />
        <path d="m9 12 5 6" stroke="#e8e8e8" strokeWidth="2" />
    </Svg>
);
const HomeIcon = () => (
    <Svg size="h-5 w-6" box="0 0 24 20">
        <path d="M0 1h24" stroke="#fff" strokeWidth="2" />
        <path d="m6 13 6-6 6 6M8 14v5h9v-5M17 7v4" stroke="#fff" strokeWidth="1.500" />
    </Svg>
);
const CalendarThumb = () => (
    <Svg size="h-8 w-6" box="0 0 24 32">
        <path d="M0 0h24v32H0z" fill="#fbf7fb" />
        <path d="M0 3h24v12H0z" fill="#7fa82c" />
        <path d="M0 3h24v3Q8 4 0 6z" fill="#a9cbe8" />
        <path d="M3 1.500h19" stroke="#2f8fd0" strokeDasharray="4 1" />
        <path d="m0 13 24-4v4l-24 2z" fill="#5c7f1e" />
        <path d="M3 18h18M3 21h18M3 24h18" stroke="#c3a8b8" strokeDasharray="2 1" />
        <path d="M0 28h7" stroke="#e0348c" strokeWidth="3" />
        <circle cx="20" cy="29" r="3" fill="#e8268c" />
    </Svg>
);

const DESKTOP_ITEMS: Tool[] = [["Trash", TrashIcon], ["File Syst...", DiskIcon], ["Home", HomeIcon], ["cal2017....", CalendarThumb]];

const DesktopIcons = () => (
    <div className="flex w-[126px] shrink-0 flex-col pt-[17px]">
        {DESKTOP_ITEMS.map(([name, Icon]) => (
            <button key={name} className="flex h-[77px] w-[123px] flex-col items-center text-white [text-shadow:0_1px_2px_rgba(0,0,0,0.6)]">
                <span className="flex h-10 items-center"><Icon /></span>
                <span className="leading-5">{name}</span>
            </button>
        ))}
    </div>
);

/* ---------- taskbar ---------- */

const Grip = ({ className }: { className: string }) => (
    <i className={`${className} w-[5px] bg-[radial-gradient(#6a6d6b_35%,transparent_40%)] bg-size-[3px_3px]`} />
);

const LAUNCHERS: Tool[] = [
    ["Terminal", () => <TerminalApp size="h-[46px] w-[46px]" />],
    ["Text editor", () => <TextApp size="h-[46px] w-[46px]" />],
    ["SeaMonkey", () => <SeamonkeyApp size="h-[46px] w-[46px]" />],
    ["Chrome", ChromeApp],
    ["Calculator", CalculatorApp],
    ["Screenshot", CameraApp],
];

const EmptyWindow = ({ className }: { className: string }) => <i className={`${className} border border-white bg-[#3d413f]`} />;
const Full = ({ children, active = false }: { children: ReactNode; active?: boolean }) => (
    <span className={`${active ? "bg-[#05ebc3]" : "bg-[#3d413f]"} flex h-full w-full items-center justify-center border border-white`}>
        {children}
    </span>
);

const PAGER: ReactNode[] = [
    <Full><TextApp size="h-4 w-4" /></Full>,
    <Full active><FreecadLogo size="h-[15px] w-[15px]" /></Full>,
    <Full><ComposerApp /></Full>,
    <EmptyWindow className="h-[11px] w-[19px]" />,
    <Full><TerminalApp size="h-4 w-4" /></Full>,
    <Full><ReaderApp /></Full>,
    <Full><TerminalApp size="h-4 w-4" /></Full>,
    <EmptyWindow className="mr-3.5 mb-2 h-[11px] w-[19px]" />,
    <EmptyWindow className="mr-3.5 mb-2 h-[10px] w-3" />,
    <Full><MailApp /></Full>,
    <Full><SeamonkeyApp size="h-4 w-4" /></Full>,
    <Full><TerminalApp size="h-4 w-4" /></Full>,
    <EmptyWindow className="mr-3.5 mb-2 h-[11px] w-[19px]" />,
    <span className="mb-1 flex h-[19px] w-full items-center justify-center border border-white bg-[#3d413f]"><MediaApp size="h-4 w-4" /></span>,
    <Full><FirefoxApp /></Full>,
    <Full><FirefoxApp /></Full>,
];

const Tray = () => (
    <div className="grid w-[73px] grid-cols-3 place-items-center border border-[#353837]">
        <Svg size="h-4 w-4" box="0 0 16 16">
            <path d="M5 3H2v12h6M10 3h4v5" stroke="#8b8d8d" strokeWidth="2" />
            <path d="M5 1h5v4H5zM11 10h4v5h-4z" fill="#8b8d8d" />
        </Svg>
        <Svg size="h-[18px] w-[18px]" box="0 0 18 18">
            <path d="M5 1 0 6h3v7h4V6h3zM13 17l5-5h-3V5h-4v7H8z" fill="#e6e6e6" />
        </Svg>
        <Svg size="h-[18px] w-5" box="0 0 20 18">
            <path d="M0 6h3l5-4v14l-5-4H0z" fill="#dedede" />
            <path d="M10 6q2 3 0 6M13 4q4 5 0 10M16 2q6 7 0 14" stroke="#dedede" strokeWidth="1.500" />
        </Svg>
        <Svg size="h-[18px] w-[18px]" box="0 0 18 18">
            <circle cx="9" cy="9" r="5" stroke="#e2e2e2" strokeWidth="4" />
            <circle cx="9" cy="9" r="7.500" stroke="#e2e2e2" strokeWidth="3" strokeDasharray="2.900 2.990" />
        </Svg>
        <MediaApp size="h-5 w-5" />
        <Svg size="h-5 w-5" box="0 0 20 20">
            <path d="M2 0h3v2H2z" fill="#ddd" />
            <rect x=".5" y="1.500" width="6" height="18" rx="1" fill="#5fb030" stroke="#cfe8c0" />
            <path d="M8 10h5q4 0 4 4" stroke="#1c1e1d" strokeWidth="1.500" />
            <path d="M12 19v-3l2-2h3l2 2v3" stroke="#8b8d8d" strokeWidth="2" />
        </Svg>
    </div>
);

const Taskbar = () => (
    <footer className="relative flex h-[52px] shrink-0 items-center bg-linear-to-b from-[#3b3f3e] to-[#404342] pl-[5px]">
        <Grip className="h-[27px]" />
        <button aria-label="Applications" className="ml-[7px]"><ManjaroLogo /></button>
        <button aria-label="Xfce" className="ml-[7px]"><XfceApp /></button>
        <div className="ml-3 flex gap-1.5">
            {LAUNCHERS.map(([label, Icon]) => (
                <button key={label} aria-label={label}><Icon /></button>
            ))}
        </div>
        <i className="ml-[310px] h-8 w-px bg-[#353837]" />
        <div className="grow" />
        <div className="flex flex-col gap-[3px] pr-1">
            <i className="h-px w-1 bg-[#2b2e2d]" />
            <i className="h-px w-1 bg-[#2b2e2d]" />
            <i className="h-px w-1 bg-[#2b2e2d]" />
        </div>
        <button className="flex h-6 w-[198px] items-center gap-2 self-start border border-[#141515] bg-linear-to-b from-[#2c2c2c] to-[#202121] pl-1 text-[#e2e2e2]">
            <FreecadLogo size="h-3.5 w-3.5" />
            FreeCAD
        </button>
        <div className="ml-0.5 grid h-[50px] grid-cols-[repeat(8,45px)] grid-rows-2 gap-px">
            {PAGER.map((cell, i) => (
                <button key={i} aria-label={`Workspace ${i + 1}`} className="flex items-center justify-center bg-[#2a2c2b]">
                    {cell}
                </button>
            ))}
        </div>
        <div className="ml-0.5 flex h-12"><Tray /></div>
        <time className="ml-1.5 pb-0.5 text-[#e2e2e2]">15:34</time>
        <button aria-label="Log out" className="ml-4">
            <Svg size="h-[30px] w-[30px]" box="0 0 30 30">
                <path d="M15 2a13 13 0 0 0 0 26" stroke="#858787" strokeWidth="4" />
                <path d="M15 13h8V9l7 6-7 6v-4h-8z" fill="#858787" />
            </Svg>
        </button>
        <button aria-label="Clipboard" className="ml-5">
            <Svg size="h-10 w-[34px]" box="0 0 34 40">
                <path d="M9 4H1v34h32V4h-8M2 37h30" stroke="#222423" />
                <path d="M9 4h4q0-4 4-4t4 4h4v7l-3 3v-3H12v3l-3-3z" stroke="#222423" />
                <circle cx="17" cy="4" r="2" stroke="#222423" />
            </Svg>
        </button>
        <button aria-label="FreeCAD" className="ml-5"><FreecadLogo size="h-[30px] w-[30px]" /></button>
        <Grip className="mr-2 ml-3 h-[27px]" />
    </footer>
);

const App = () => (
    <div className="relative flex h-screen flex-col overflow-hidden font-['Noto_Sans',sans-serif] text-[13px] leading-5">
        <Wallpaper />
        <div className="relative flex min-h-0 grow">
            <DesktopIcons />
            <FreecadWindow />
        </div>
        <Taskbar />
    </div>
);

export default App;
